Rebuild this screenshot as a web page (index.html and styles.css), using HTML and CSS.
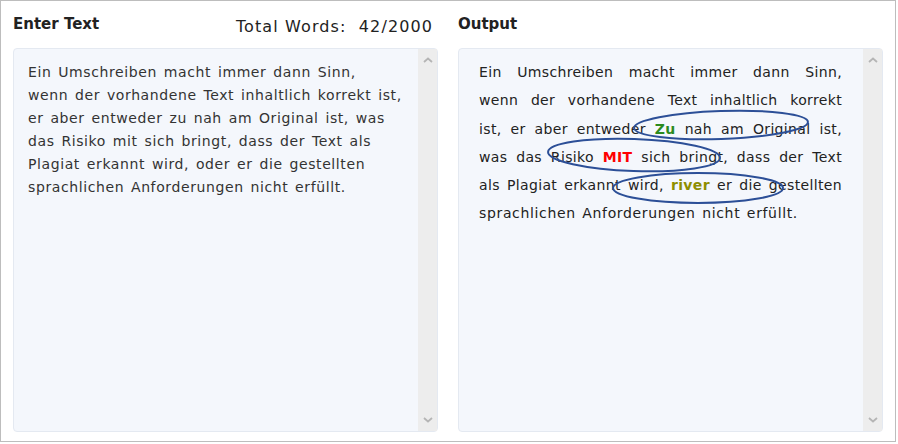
FILE: index.html
```html
<!DOCTYPE html>
<html lang="de">
<head>
<meta charset="utf-8">
<link rel="stylesheet" href="styles.css">
</head>
<body>
<div class="frame">
  <section class="col">
    <div class="head">
      <h2 class="title">Enter Text</h2>
      <div class="count">Total Words:&nbsp; 42/2000</div>
    </div>
    <div class="box">
      <div class="content input-text">
        <span class="ln">Ein Umschreiben macht immer dann Sinn,</span>
        <span class="ln">wenn der vorhandene Text inhaltlich korrekt ist,</span>
        <span class="ln">er aber entweder zu nah am Original ist, was</span>
        <span class="ln">das Risiko mit sich bringt, dass der Text als</span>
        <span class="ln">Plagiat erkannt wird, oder er die gestellten</span>
        <span class="ln">sprachlichen Anforderungen nicht erfüllt.</span>
      </div>
      <div class="scrollbar">
        <svg class="chev" viewBox="0 0 10 6" width="10" height="6"><path d="M1 5 L5 1.5 L9 5" fill="none" stroke="#b5b5b5" stroke-width="1.8"/></svg>
        <svg class="chev" viewBox="0 0 10 6" width="10" height="6"><path d="M1 1 L5 4.5 L9 1" fill="none" stroke="#b5b5b5" stroke-width="1.8"/></svg>
      </div>
    </div>
  </section>
  <section class="col">
    <div class="head">
      <h2 class="title">Output</h2>
    </div>
    <div class="box out-box">
      <div class="content output-text">
        <span class="ln j">Ein Umschreiben macht immer dann Sinn,</span>
        <span class="ln j">wenn der vorhandene Text inhaltlich korrekt</span>
        <span class="ln j">ist, er aber entweder <b class="w-green">Zu</b> nah am Original ist,</span>
        <span class="ln j">was das Risiko <b class="w-red">MIT</b> sich bringt, dass der Text</span>
        <span class="ln j">als Plagiat erkannt wird, <b class="w-olive">river</b> er die gestellten</span>
        <span class="ln last">sprachlichen Anforderungen nicht erfüllt.</span>
      </div>
      <div class="scrollbar">
        <svg class="chev" viewBox="0 0 10 6" width="10" height="6"><path d="M1 5 L5 1.5 L9 5" fill="none" stroke="#b5b5b5" stroke-width="1.8"/></svg>
        <svg class="chev" viewBox="0 0 10 6" width="10" height="6"><path d="M1 1 L5 4.5 L9 1" fill="none" stroke="#b5b5b5" stroke-width="1.8"/></svg>
      </div>
      <svg class="marks" width="424" height="384" viewBox="0 0 424 384">
        <ellipse cx="263" cy="77" rx="87" ry="14" transform="rotate(-2 263 77)" fill="none" stroke="#2c4f97" stroke-width="2"/>
        <ellipse cx="176" cy="107" rx="86" ry="16" transform="rotate(2 176 107)" fill="none" stroke="#2c4f97" stroke-width="2"/>
        <ellipse cx="240" cy="140" rx="85" ry="15" fill="none" stroke="#2c4f97" stroke-width="2"/>
      </svg>
    </div>
  </section>
</div>
</body>
</html>
```
FILE: styles.css
```css
html, body {
  margin: 0;
  padding: 0;
  background: #ffffff;
}
.frame {
  width: 896px;
  height: 442px;
  box-sizing: border-box;
  border: 1px solid #bdbdbd;
  display: grid;
  grid-template-columns: 425px 425px;
  column-gap: 20px;
  padding: 9px 0 0 12px;
  font-family: "DejaVu Sans", "Open Sans", sans-serif;
  color: #333333;
}
.col {
  display: flex;
  flex-direction: column;
}
.head {
  height: 28px;
  display: flex;
  align-items: center;
  justify-content: space-between;
  margin-bottom: 10px;
  padding-right: 5px;
}
.title {
  margin: 0;
  font-size: 15px;
  font-weight: 700;
  color: #222222;
}
.count {
  font-size: 16px;
  font-weight: 400;
  letter-spacing: 1.1px;
  color: #222222;
  padding-top: 4px;
}
.box {
  position: relative;
  height: 384px;
  box-sizing: border-box;
  border: 1px solid #e4e9f1;
  border-radius: 4px;
  background: #f4f7fc;
  display: flex;
}
.content {
  flex: 1;
  font-size: 14px;
  display: flex;
  flex-direction: column;
}
.ln {
  display: block;
  white-space: nowrap;
}
.j {
  text-align: justify;
  text-align-last: justify;
}
.input-text {
  padding: 12px 12px 0 14px;
  line-height: 23px;
  letter-spacing: 0.6px;
  word-spacing: 1.8px;
}
.output-text {
  padding: 9px 21px 0 20px;
  line-height: 28.3px;
  letter-spacing: 0.35px;
  color: #222222;
}
.last {
  letter-spacing: 0.65px;
  word-spacing: 1.5px;
}
.scrollbar {
  width: 19px;
  background: #ededed;
  display: flex;
  flex-direction: column;
  justify-content: space-between;
  align-items: center;
  padding: 8px 0 8px;
}
.w-green { color: #2b8a1e; }
.w-red { color: #ff0000; }
.w-olive { color: #8e8e00; }
.marks {
  position: absolute;
  left: -1px;
  top: -1px;
  pointer-events: none;
}
```
